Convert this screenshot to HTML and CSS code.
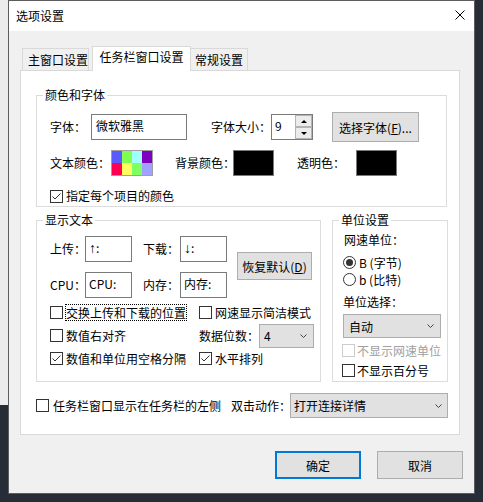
FILE: index.html
```html
<!DOCTYPE html>
<html lang="zh-CN">
<head>
<meta charset="utf-8">
<title>选项设置</title>
<link rel="stylesheet" href="styles.css">
</head>
<body>
<div class="window">
  <div class="titlebar">
    <span class="title">选项设置</span>
    <svg class="close" width="10" height="10" viewBox="0 0 10 10"><path d="M0.5 0.5L9.5 9.5M9.5 0.5L0.5 9.5" stroke="#000" stroke-width="1" fill="none"/></svg>
  </div>
  <div class="client">
    <div class="tabs">
      <div class="tab tab-main">主窗口设置</div>
      <div class="tab tab-active">任务栏窗口设置</div>
      <div class="tab tab-general">常规设置</div>
    </div>
    <div class="panel">
      <div class="group group-font">
        <div class="legend">颜色和字体</div>
        <div class="font-row">
          <span class="lbl w-font">字体：</span>
          <div class="edit edit-font">微软雅黑</div>
          <span class="lbl w-size">字体大小：</span>
          <div class="spin">
            <div class="spin-text">9</div>
            <div class="updown">
              <div class="ud"><i class="tri-up"></i></div>
              <div class="ud"><i class="tri-down"></i></div>
            </div>
          </div>
          <div class="btn btn-font">选择字体(<u>F</u>)...</div>
        </div>
        <div class="color-row">
          <span class="lbl w-text-color">文本颜色：</span>
          <div class="swatch">
            <i class="c1"></i><i class="c2"></i><i class="c3"></i><i class="c4"></i>
            <i class="c5"></i><i class="c6"></i><i class="c7"></i><i class="c8"></i>
          </div>
          <span class="lbl w-bg">背景颜色：</span>
          <div class="black"></div>
          <span class="lbl w-trans">透明色：</span>
          <div class="black"></div>
        </div>
        <div class="check-row">
          <span class="cb"><svg width="11" height="11" viewBox="0 0 11 11"><path d="M1.5 5.5L4 8L9.5 2.5" stroke="#333" stroke-width="1" fill="none"/></svg></span>
          <span class="cb-text">指定每个项目的颜色</span>
        </div>
      </div>

      <div class="group-row">
        <div class="group group-text">
          <div class="legend">显示文本</div>
          <div class="text-grid">
            <span class="lbl">上传：</span>
            <div class="edit"><span class="arrow">↑</span>:</div>
            <span class="lbl lbl-right">下载：</span>
            <div class="edit"><span class="arrow">↓</span>:</div>
            <div class="btn btn-reset">恢复默认(<u>D</u>)</div>
            <span class="lbl">CPU：</span>
            <div class="edit">CPU:</div>
            <span class="lbl lbl-right">内存：</span>
            <div class="edit">内存:</div>
          </div>
          <div class="check-grid">
            <div class="ci"><span class="cb"></span><span class="focus">交换上传和下载的位置</span></div>
            <div class="ci"><span class="cb"></span><span class="cb-text">网速显示简洁模式</span></div>
            <div class="ci"><span class="cb"></span><span class="cb-text">数值右对齐</span></div>
            <div class="ci"><span class="lbl w-digits">数据位数：</span><div class="combo combo-digits"><span>4</span><svg width="7" height="4" viewBox="0 0 7 4"><path d="M0.5 0.5L3.5 3.5L6.5 0.5" stroke="#444" fill="none"/></svg></div></div>
            <div class="ci"><span class="cb"><svg width="11" height="11" viewBox="0 0 11 11"><path d="M1.5 5.5L4 8L9.5 2.5" stroke="#333" stroke-width="1" fill="none"/></svg></span><span class="cb-text">数值和单位用空格分隔</span></div>
            <div class="ci"><span class="cb"><svg width="11" height="11" viewBox="0 0 11 11"><path d="M1.5 5.5L4 8L9.5 2.5" stroke="#333" stroke-width="1" fill="none"/></svg></span><span class="cb-text">水平排列</span></div>
          </div>
        </div>

        <div class="group group-unit">
          <div class="legend">单位设置</div>
          <div class="unit-body">
            <div class="u-label u-l1">网速单位：</div>
            <div class="radio-row r1"><span class="radio on"></span><span class="radio-text">B (字节)</span></div>
            <div class="radio-row"><span class="radio"></span><span class="radio-text">b (比特)</span></div>
            <div class="u-label u-l2">单位选择：</div>
            <div class="combo combo-unit"><span>自动</span><svg width="7" height="4" viewBox="0 0 7 4"><path d="M0.5 0.5L3.5 3.5L6.5 0.5" stroke="#444" fill="none"/></svg></div>
            <div class="u-check uc1"><span class="cb cb-disabled"></span><span class="u-cb-text disabled">不显示网速单位</span></div>
            <div class="u-check uc2"><span class="cb"></span><span class="u-cb-text">不显示百分号</span></div>
          </div>
        </div>
      </div>

      <div class="bottom-row">
        <span class="cb"></span>
        <span class="bottom-text">任务栏窗口显示在任务栏的左侧</span>
        <span class="lbl w-action">双击动作：</span>
        <div class="combo combo-action"><span>打开连接详情</span><svg width="7" height="4" viewBox="0 0 7 4"><path d="M0.5 0.5L3.5 3.5L6.5 0.5" stroke="#444" fill="none"/></svg></div>
      </div>
    </div>
    <div class="buttons">
      <div class="btn dlg-btn btn-ok">确定</div>
      <div class="btn dlg-btn">取消</div>
    </div>
  </div>
</div>
</body>
</html>
```
FILE: styles.css
```css
* { box-sizing: border-box; }
html, body { margin: 0; padding: 0; }
body {
  width: 483px;
  height: 502px;
  overflow: hidden;
  background: linear-gradient(#ececec, #ececec) 0 0 / 8px 405px no-repeat, #272d37;
  font-family: "Microsoft YaHei", "Noto Sans CJK SC", sans-serif;
  font-size: 12px;
  color: #000;
}
.window {
  margin-left: 8px;
  width: 467px;
  height: 494px;
  border: 1px solid #5c5c5c;
  background: #f0f0f0;
  display: flex;
  flex-direction: column;
}
.titlebar {
  height: 30px;
  flex-shrink: 0;
  background: #fff;
  display: flex;
  align-items: center;
  justify-content: space-between;
  padding: 0 9px 0 7px;
}
.title { line-height: 30px; white-space: nowrap; }
.close { margin-top: -2px; }
.client { flex: 1; padding-top: 15px; }

/* tabs */
.tabs {
  display: flex;
  align-items: flex-end;
  height: 24px;
  padding-left: 13px;
}
.tab {
  height: 22px;
  border: 1px solid #d9d9d9;
  border-bottom: none;
  background: #f0f0f0;
  line-height: 21px;
  white-space: nowrap;
}
.tab-main { width: 67px; padding-left: 5px; }
.tab-active {
  width: 99px;
  height: 25px;
  margin-left: 3px;
  margin-bottom: -1px;
  padding-top: 1px;
  line-height: 18px;
  background: #fff;
  text-align: center;
  position: relative;
  z-index: 1;
}
.tab-general { width: 58px; margin-left: -1px; text-align: center; }

.panel {
  margin-left: 11px;
  width: 440px;
  height: 365px;
  border: 1px solid #d9d9d9;
  background: #fff;
  padding: 24px 0 0 15px;
}

/* group boxes */
.group { border: 1px solid #dcdcdc; }
.group-font { width: 411px; height: 112px; }
.legend {
  width: fit-content;
  margin: -9px 0 0 6px;
  padding: 0 2px;
  background: #fff;
  height: 16px;
  line-height: 16px;
  white-space: nowrap;
}
.lbl { white-space: nowrap; flex-shrink: 0; line-height: 16px; }

.edit {
  border: 1px solid #7a7a7a;
  background: #fff;
  height: 26px;
  padding: 2px 3px;
  line-height: 18px;
  white-space: nowrap;
  flex-shrink: 0;
  overflow: hidden;
}
.arrow {
  font-family: "Liberation Sans", "DejaVu Sans", sans-serif;
  font-size: 14px;
  line-height: 14px;
}
.btn {
  border: 1px solid #adadad;
  background: #e1e1e1;
  display: flex;
  align-items: center;
  justify-content: center;
  white-space: nowrap;
  flex-shrink: 0;
}

.font-row {
  display: flex;
  align-items: center;
  height: 30px;
  margin-top: 9px;
  padding-left: 13px;
}
.w-font { width: 41px; }
.edit-font { width: 96px; padding-left: 4px; }
.w-size { width: 60px; margin-left: 24px; }
.spin {
  width: 42px;
  height: 26px;
  border: 1px solid #7a7a7a;
  display: flex;
  flex-shrink: 0;
}
.spin-text { flex: 1; padding: 2px 3px; line-height: 18px; }
.updown { width: 17px; display: flex; flex-direction: column; }
.ud {
  flex: 1;
  border: 1px solid #b4b4b4;
  background: #ececec;
  display: flex;
  align-items: center;
  justify-content: center;
}
.tri-up {
  width: 0; height: 0;
  border-left: 3px solid transparent;
  border-right: 3px solid transparent;
  border-bottom: 3px solid #000;
}
.tri-down {
  width: 0; height: 0;
  border-left: 3px solid transparent;
  border-right: 3px solid transparent;
  border-top: 3px solid #000;
}
.btn-font { width: 87px; height: 30px; margin-left: 19px; }

.color-row {
  display: flex;
  align-items: center;
  height: 26px;
  margin-top: 8px;
  padding-left: 13px;
}
.w-text-color { width: 61px; }
.swatch {
  width: 42px;
  height: 26px;
  border: 1px solid #a0a0a0;
  display: grid;
  grid-template-columns: repeat(4, 1fr);
  grid-template-rows: repeat(2, 1fr);
  flex-shrink: 0;
}
.swatch i { display: block; }
.c1 { background: #5a5aff; }
.c2 { background: #80ff50; }
.c3 { background: #a0ffff; }
.c4 { background: #8000c0; }
.c5 { background: #ff0050; }
.c6 { background: #ffff60; }
.c7 { background: #80ff60; }
.c8 { background: #a0a0ff; }
.w-bg { width: 58px; margin-left: 22px; }
.w-trans { width: 59px; margin-left: 23px; }
.black {
  width: 41px;
  height: 26px;
  background: #000;
  border: 1px solid #7a7a7a;
  flex-shrink: 0;
}

.cb {
  width: 13px;
  height: 13px;
  border: 1px solid #333;
  background: #fff;
  display: inline-flex;
  flex-shrink: 0;
}
.cb svg { display: block; }
.cb-disabled { border-color: #cccccc; }
.check-row {
  display: flex;
  align-items: center;
  height: 16px;
  margin-top: 12px;
  padding-left: 13px;
}
.cb-text { margin-left: 3px; line-height: 16px; white-space: nowrap; }

.group-row { display: flex; margin-top: 13px; }
.group-text { width: 285px; height: 162px; margin-right: 11px; }
.group-unit { width: 116px; height: 162px; }

.text-grid {
  display: grid;
  grid-template-columns: 35px 47px 48px 47px 85px;
  grid-template-rows: 26px 26px;
  row-gap: 10px;
  margin-top: 8px;
  padding-left: 13px;
}
.text-grid .lbl { align-self: center; }
.lbl-right { padding-left: 11px; }
.btn-reset {
  grid-column: 5;
  grid-row: 1 / span 2;
  width: 75px;
  height: 28px;
  margin-top: 16px;
  justify-self: end;
  align-self: start;
}

.check-grid {
  display: grid;
  grid-template-columns: 149px 1fr;
  grid-auto-rows: 23px;
  margin-top: 3px;
  padding-left: 13px;
}
.ci { display: flex; align-items: center; white-space: nowrap; }
.focus {
  margin-left: 2px;
  border: 1px dotted #000;
  line-height: 15px;
  white-space: nowrap;
}
.w-digits { width: 60px; }

.combo {
  height: 24px;
  border: 1px solid #adadad;
  background: #e1e1e1;
  display: flex;
  align-items: center;
  justify-content: space-between;
  padding: 0 6px 0 4px;
  white-space: nowrap;
  flex-shrink: 0;
}
.combo svg { display: block; }
.combo-digits { width: 55px; }
.combo-unit { width: 98px; margin-top: 4px; margin-left: 1px; padding-left: 5px; }
.combo-action { width: 158px; height: 25px; padding-right: 5px; padding-left: 3px; }

.unit-body { padding-left: 9px; }
.u-label { height: 16px; line-height: 16px; white-space: nowrap; }
.u-l1 { margin-top: 4px; margin-left: 2px; }
.u-l2 { margin-top: 6px; margin-left: 1px; }
.radio-row {
  display: flex;
  align-items: center;
  height: 17px;
  margin-left: 1px;
}
.r1 { margin-top: 6px; }
.radio {
  width: 13px;
  height: 13px;
  border: 1px solid #333;
  border-radius: 50%;
  background: #fff;
  display: flex;
  align-items: center;
  justify-content: center;
  flex-shrink: 0;
}
.radio.on::after {
  content: "";
  width: 7px;
  height: 7px;
  border-radius: 50%;
  background: #333;
}
.radio-text { margin-left: 3px; line-height: 16px; white-space: nowrap; }
.u-check { display: flex; align-items: center; height: 17px; }
.uc1 { margin-top: 4px; }
.uc2 { margin-top: 3px; }
.u-cb-text { margin-left: 2px; line-height: 16px; white-space: nowrap; }
.disabled { color: #a0a0a0; }

.bottom-row {
  display: flex;
  align-items: center;
  height: 25px;
  margin-top: 11px;
}
.bottom-text { margin-left: 4px; line-height: 16px; white-space: nowrap; }
.w-action { width: 59px; margin-left: 10px; }

.buttons {
  display: flex;
  justify-content: flex-end;
  gap: 16px;
  margin-top: 16px;
  padding-right: 11px;
}
.dlg-btn { width: 86px; height: 28px; }
.btn-ok { border: 2px solid #0078d7; }
```
